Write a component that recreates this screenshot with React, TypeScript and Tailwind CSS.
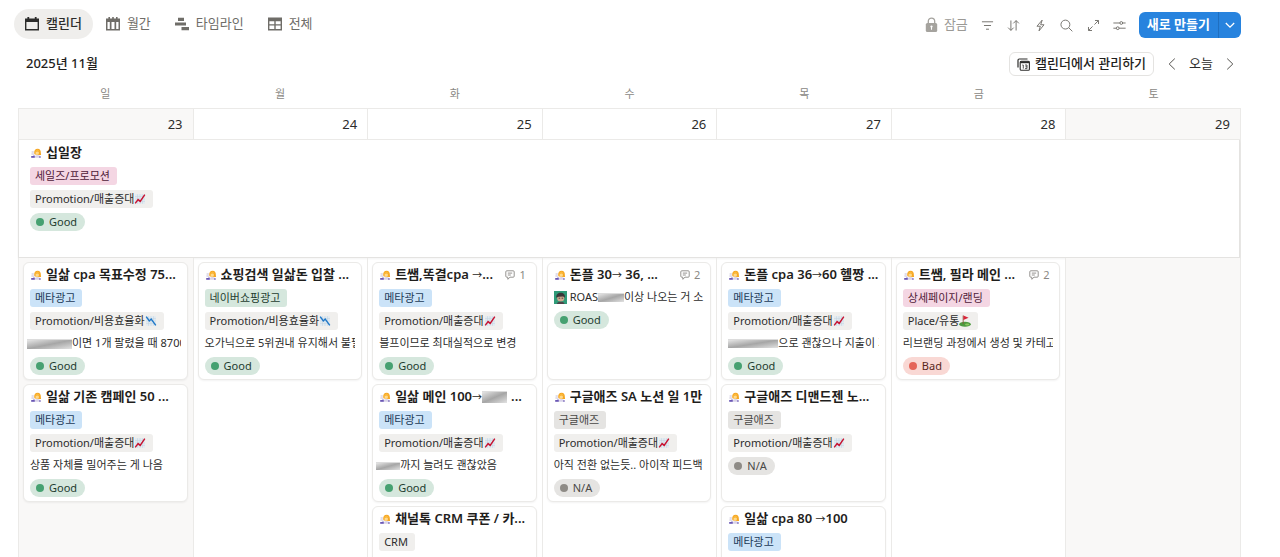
import type { ReactNode } from 'react';

type Tone = 'blue' | 'pink' | 'green' | 'light' | 'gray';
type StatusName = 'Good' | 'Bad' | 'N/A';
type Mark = 'up' | 'down' | 'golf';

interface Item {
  title: ReactNode;
  comments?: number;
  tag?: { label: string; tone: Tone };
  goal?: { label: string; mark: Mark };
  note?: ReactNode;
  status?: StatusName;
}

const toneClass: Record<Tone, string> = {
  blue: 'bg-[#cbe3f8] text-[#1b3a57]',
  pink: 'bg-[#f4d6e3] text-[#4f2038]',
  green: 'bg-[#d5e7dd] text-[#1f3d30]',
  light: 'bg-[#f0efed] text-[#2c2c2b]',
  gray: 'bg-[#e5e4e2] text-[#494846]',
};

const statusClass: Record<StatusName, { pill: string; dot: string }> = {
  Good: { pill: 'bg-[#d5e7dd] text-[#1f3d30]', dot: 'bg-[#46a171]' },
  Bad: { pill: 'bg-[#f9d8d4] text-[#5a2620]', dot: 'bg-[#e56458]' },
  'N/A': { pill: 'bg-[#e5e4e2] text-[#494846]', dot: 'bg-[#8e8b86]' },
};

function PersonEmoji() {
  return (
    <svg viewBox="0 0 12 12" className="size-3 shrink-0" aria-hidden="true">
      <path d="M4.2 6.6c-.2-3 1-4.8 3.4-4.8s3.3 1.6 3.3 4.6l.2 1.6H9.6L5 7.6z" fill="#f5a623" />
      <circle cx="7.2" cy="6" r="1.8" fill="#ffd98a" />
      <path d="M5.2 5.2c1.4 0 2.3-.5 2.8-1.2.4.7.9 1 1.6 1.2l-.5-2-1.7-.7-1.8.9z" fill="#fbb83a" />
      <path d="M4.6 10.8c0-1.8 1-2.8 2.9-2.8s3 1 3 2.8z" fill="#d9d3ea" />
      <path d="M1.6 4.6h2.2v.9H1.6zM1.4 6.4h2.4v1H1.4z" fill="#c3bdd6" />
      <path d="M1.2 9h3.6v1.8H1.2z" fill="#6a57b4" />
      <path d="M3.4 7.8h1.2V9H3.4z" fill="#a79bd0" />
      <path d="M9.3 9.2h1.3v1.6H9.3z" fill="#6a57b4" />
    </svg>
  );
}

function MarkEmoji({ mark }: { mark: Mark }) {
  if (mark === 'golf') {
    return (
      <svg viewBox="0 0 12 12" className="size-3 shrink-0" aria-hidden="true">
        <ellipse cx="6" cy="9.3" rx="5.8" ry="2.5" fill="#4c9a3f" />
        <ellipse cx="8.2" cy="9.5" rx="2.2" ry=".9" fill="#8cc860" />
        <path d="M3.7.5h.9v8.4h-.9z" fill="#8a5a3c" />
        <path d="M4.4.5 9.6 2.7 4.4 5z" fill="#d9253a" />
      </svg>
    );
  }
  return (
    <svg viewBox="0 0 12 12" className="size-3 shrink-0" aria-hidden="true">
      <path d="M1 1.2h10v9.6H1z" fill="#e2ebf2" />
      <path d="M1 3.6h10M1 6h10M1 8.4h10M3.5 1.2v9.6M6 1.2v9.6M8.5 1.2v9.6" stroke="#c3d0dc" strokeWidth=".5" />
      {mark === 'up' ? (
        <path d="M1.2 10.4 4.1 6.6l2.1 1.8L10.8 1.6" fill="none" stroke="#c8102e" strokeWidth="1.4" />
      ) : (
        <path d="M1.2 1.6 4.3 6l1.9-2 4.6 6.4" fill="none" stroke="#1f78c8" strokeWidth="1.4" />
      )}
    </svg>
  );
}

function Avatar() {
  return (
    <svg viewBox="0 0 13 13" className="size-[13px] shrink-0" aria-hidden="true">
      <path d="M0 0h13v13H0z" fill="#2f9b78" />
      <circle cx="6.7" cy="7" r="3.6" fill="#cfa88f" />
      <path d="M2.3 6.8C2 3.4 4 1.8 6.7 1.8s4.6 1.7 4.2 5L9.2 5.4l-4.6.3z" fill="#3a3638" />
      <path d="M4.6 7.2h1.6M7.6 7.2h1.6" stroke="#3a2c2a" strokeWidth=".8" />
      <path d="M2.8 13c.3-1.7 1.7-2.3 3.9-2.3s3.5.6 3.9 2.3z" fill="#4d444a" />
    </svg>
  );
}

function Smear({ className }: { className: string }) {
  return (
    <span
      className={`inline-block shrink-0 border-t border-[#dcdcdc] bg-linear-to-br from-[#e6e6e6] via-[#a6a6a6] to-[#e2e2e2] ${className}`}
    />
  );
}

function Arrow() {
  return <span className="text-[10px] font-normal">→</span>;
}

function Tag({ tone, children }: { tone: Tone; children: ReactNode }) {
  return (
    <span
      className={`flex h-[18px] w-fit items-center whitespace-nowrap rounded-[3px] pl-[5px] pr-[7px] text-[11px] ${toneClass[tone]}`}
    >
      {children}
    </span>
  );
}

function Status({ name }: { name: StatusName }) {
  const s = statusClass[name];
  return (
    <span
      className={`flex h-[18px] w-fit items-center gap-[5px] rounded-full pl-[6px] pr-2 text-[11px] ${s.pill}`}
    >
      <span className={`size-2 rounded-full ${s.dot}`} />
      {name}
    </span>
  );
}

function EventBody({ item }: { item: Item }) {
  return (
    <>
      <div className="mb-1 flex h-5 items-center gap-1">
        <PersonEmoji />
        <h3 className="flex min-w-0 flex-1 items-center overflow-hidden whitespace-pre text-[13px] font-semibold text-[#1f1e1c]">
          {item.title}
        </h3>
        {item.comments !== undefined && (
          <span className="flex shrink-0 items-center gap-1 pr-1 text-[11px] text-[#8a8884]">
            <svg viewBox="0 0 10 10" className="size-[10px]" fill="none" stroke="currentColor" strokeWidth=".9" aria-hidden="true">
              <path d="M1.8.8h6.4q1 0 1 1v4.4q0 1-1 1H5L2.8 9.3V7.2h-1q-1 0-1-1V1.8q0-1 1-1zM2.8 3.1h4.4M2.8 5h3" />
            </svg>
            {item.comments}
          </span>
        )}
      </div>
      <div className="flex flex-col gap-[5px]">
        {item.tag && <Tag tone={item.tag.tone}>{item.tag.label}</Tag>}
        {item.goal && (
          <Tag tone="light">
            {item.goal.label}
            <MarkEmoji mark={item.goal.mark} />
          </Tag>
        )}
        {item.note && (
          <p className="-ml-[3px] flex h-[17px] items-center overflow-hidden whitespace-nowrap pl-[3px] text-[11px] text-[#2c2c2b]">
            {item.note}
          </p>
        )}
        {item.status && <Status name={item.status} />}
      </div>
    </>
  );
}

const meta = { label: '메타광고', tone: 'blue' as Tone };
const google = { label: '구글애즈', tone: 'gray' as Tone };
const sales = { label: 'Promotion/매출증대', mark: 'up' as Mark };
const cost = { label: 'Promotion/비용효율화', mark: 'down' as Mark };

const market: Item = {
  title: '십일장',
  tag: { label: '세일즈/프로모션', tone: 'pink' },
  goal: sales,
  status: 'Good',
};

const days: { name: string; date: number; items: Item[] }[] = [
  {
    name: '일',
    date: 23,
    items: [
      {
        title: '일삶 cpa 목표수정 75...',
        tag: meta,
        goal: cost,
        note: (
          <>
            <Smear className="-ml-[3px] h-[10px] w-[45px]" />
            이면 1개 팔렸을 때 8700
          </>
        ),
        status: 'Good',
      },
      { title: '일삶 기존 캠페인 50 ...', tag: meta, goal: sales, note: '상품 자체를 밀어주는 게 나음', status: 'Good' },
    ],
  },
  {
    name: '월',
    date: 24,
    items: [
      {
        title: '쇼핑검색 일삶돈 입찰 ...',
        tag: { label: '네이버쇼핑광고', tone: 'green' },
        goal: cost,
        note: '오가닉으로 5위권내 유지해서 불필',
        status: 'Good',
      },
    ],
  },
  {
    name: '화',
    date: 25,
    items: [
      {
        title: (
          <>
            {'트쌤,똑결cpa '}
            <Arrow />
            ...
          </>
        ),
        comments: 1,
        tag: meta,
        goal: sales,
        note: '블프이므로 최대실적으로 변경',
        status: 'Good',
      },
      {
        title: (
          <>
            일삶 메인 100
            <Arrow />
            <Smear className="mr-1 h-3 w-[25px]" />
            ...
          </>
        ),
        tag: meta,
        goal: sales,
        note: (
          <>
            <Smear className="-ml-[3px] h-2 w-[24px]" />
            까지 늘려도 괜찮았음
          </>
        ),
        status: 'Good',
      },
      { title: '채널톡 CRM 쿠폰 / 카...', tag: { label: 'CRM', tone: 'light' } },
    ],
  },
  {
    name: '수',
    date: 26,
    items: [
      {
        title: (
          <>
            돈플 30
            <Arrow />
            {' 36, ...'}
          </>
        ),
        comments: 2,
        note: (
          <>
            <Avatar />
            <span className="ml-[3px]">ROAS</span>
            <Smear className="h-[9px] w-[26px]" />
            이상 나오는 거 소
          </>
        ),
        status: 'Good',
      },
      { title: '구글애즈 SA 노션 일 1만', tag: google, goal: sales, note: '아직 전환 없는듯.. 아이작 피드백', status: 'N/A' },
    ],
  },
  {
    name: '목',
    date: 27,
    items: [
      {
        title: (
          <>
            돈플 cpa 36
            <Arrow />
            60 헬짱 ...
          </>
        ),
        tag: meta,
        goal: sales,
        note: (
          <>
            <Smear className="h-[9px] w-[50px]" />
            으로 괜찮으나 지출이 기존
          </>
        ),
        status: 'Good',
      },
      { title: '구글애즈 디맨드젠 노...', tag: google, goal: sales, status: 'N/A' },
      {
        title: (
          <>
            {'일삶 cpa 80 '}
            <Arrow />
            100
          </>
        ),
        tag: meta,
      },
    ],
  },
  {
    name: '금',
    date: 28,
    items: [
      {
        title: '트쌤, 필라 메인 ...',
        comments: 2,
        tag: { label: '상세페이지/랜딩', tone: 'pink' },
        goal: { label: 'Place/유통', mark: 'golf' },
        note: '리브랜딩 과정에서 생성 및 카테고리',
        status: 'Bad',
      },
    ],
  },
  { name: '토', date: 29, items: [] },
];

const tabs: { label: string; icon: ReactNode }[] = [
  {
    label: '캘린더',
    icon: <path fillRule="evenodd" d="M2.4 0h1.8v1.5h5.6V0h1.8v1.5H14V13.4H0V1.5h2.4zM1.4 5v7h11.2V5z" />,
  },
  {
    label: '월간',
    icon: (
      <path
        fillRule="evenodd"
        d="M2.4 0H4v1.5h2.2V0h1.6v1.5H10V0h1.6v1.5H14v11.9H0V1.5h2.4zM1.5 5v7h2.3V5zM5.5 5v7h3V5zM10.2 5v7h2.3V5z"
      />
    ),
  },
  { label: '타임라인', icon: <path d="M3 .8h6v3.2H3zM0 5.4h11v3.2H0zM6.5 10H14v3.2H6.5z" /> },
  {
    label: '전체',
    icon: (
      <path
        fillRule="evenodd"
        d="M0 .5h14v13H0zM1.4 4.2v3h4.9v-3zM7.7 4.2v3h4.9v-3zM1.4 8.6v3.3h4.9V8.6zM7.7 8.6v3.3h4.9V8.6z"
      />
    ),
  },
];

const tools: { label: string; icon: ReactNode }[] = [
  { label: '필터', icon: <path d="M1 3h12M3.2 7h7.6M5.4 11h3.2" /> },
  { label: '정렬', icon: <path d="M4.2 1.6v10.6M1.2 9.3l3 3 3-3M9.8 12.4V1.8M6.8 4.7l3-3 3 3" /> },
  { label: '자동화', icon: <path d="M8.8 1.2 3.2 7.8h3.6L5.4 12.8l5.4-6.6H7.2z" strokeLinejoin="round" /> },
  { label: '검색', icon: <path d="M10.6 6a4.8 4.8 0 1 1-9.6 0 4.8 4.8 0 0 1 9.6 0zM9.4 9.4l3.9 3.9" /> },
  { label: '전체 화면', icon: <path d="M8.6 1.6h3.8v3.8M12.2 1.8 8 6M5.4 12.4H1.6V8.6M1.8 12.2 6 8" /> },
  {
    label: '설정',
    icon: (
      <path d="M.4 4.3h7M10.4 4.3h3.2M10.4 4.3a1.5 1.5 0 1 1-3 0 1.5 1.5 0 0 1 3 0zM.4 9.9h3.2M6.6 9.9h7M6.6 9.9a1.5 1.5 0 1 1-3 0 1.5 1.5 0 0 1 3 0z" />
    ),
  },
];

const isWeekend = (i: number) => i === 0 || i === 6;

export default function App() {
  return (
    <div className="flex h-screen flex-col overflow-hidden bg-white pl-[18px] pr-[39px] font-['Noto_Sans','Noto_Sans_CJK_KR',sans-serif] text-[#2c2c2b]">
      <header className="-ml-1 flex h-[52px] shrink-0 items-start justify-between pt-[9px]">
        <nav className="flex gap-[2px]">
          {tabs.map((tab, i) => (
            <button
              key={tab.label}
              type="button"
              className={`flex h-[30px] items-center gap-[7px] rounded-full px-[11px] text-[13px] ${
                i === 0 ? 'bg-[#efeeec] font-medium text-[#2c2c2b]' : 'text-[#6f6d68]'
              }`}
            >
              <svg viewBox="0 0 14 14" className="size-[14px]" fill="currentColor" aria-hidden="true">
                {tab.icon}
              </svg>
              {tab.label}
            </button>
          ))}
        </nav>
        <div className="mt-[3px] flex h-[26px] items-center">
          <button type="button" className="flex items-center gap-[6px] pr-[6px] text-[13px] text-[#9b9995]">
            <svg viewBox="0 0 13 16" className="h-4 w-[13px]" aria-hidden="true">
              <path d="M3.3 7V4.3a3.2 3.2 0 0 1 6.4 0V7" fill="none" stroke="#a5a39e" strokeWidth="1.3" />
              <rect x=".8" y="6" width="11.4" height="9" rx="1.6" fill="#a5a39e" />
              <circle cx="6.5" cy="9.6" r="1.1" fill="#fff" />
              <path d="M6.5 9.6v2.6" stroke="#fff" strokeWidth="1.1" strokeLinecap="round" />
            </svg>
            잠금
          </button>
          <div className="mr-[6px] grid w-[159px] grid-cols-6">
            {tools.map((tool) => (
              <button key={tool.label} type="button" aria-label={tool.label} className="flex h-[26px] items-center justify-center text-[#6f6d68]">
                <svg viewBox="0 0 14 14" className="size-[13px]" fill="none" stroke="currentColor" strokeWidth="1" aria-hidden="true">
                  {tool.icon}
                </svg>
              </button>
            ))}
          </div>
          <div className="flex h-[26px] overflow-hidden rounded-md bg-[#2783de] text-white">
            <button type="button" className="border-r border-[#1f6fc0] px-2 text-[13px] font-semibold">
              새로 만들기
            </button>
            <button type="button" aria-label="템플릿 선택" className="flex w-[22px] items-center justify-center">
              <svg viewBox="0 0 10 10" className="size-[10px]" fill="none" stroke="currentColor" strokeWidth="1.3" aria-hidden="true">
                <path d="M.8 3 5 7.2 9.2 3" />
              </svg>
            </button>
          </div>
        </div>
      </header>

      <div className="flex h-6 shrink-0 items-center justify-between pl-2">
        <h2 className="text-[13px] font-medium text-[#1f1e1c]">2025년 11월</h2>
        <div className="flex items-center">
          <button
            type="button"
            className="mr-[11px] flex h-6 items-center gap-[5px] rounded-md border border-[#e4e3e1] px-[7px] text-[13px] font-medium text-[#1f1e1c]"
          >
            <svg viewBox="0 0 13 13" className="size-[13px]" aria-hidden="true">
              <path d="M1 9.5V2.2Q1 1 2.2 1h8.3" fill="none" stroke="#2c2c2b" strokeWidth="1.2" />
              <path d="M3.2 4.4q0-1.1 1.1-1.1h7q1.1 0 1.1 1.1v6.8q0 1.1-1.1 1.1h-7q-1.1 0-1.1-1.1z" fill="none" stroke="#2c2c2b" strokeWidth="1.1" />
              <path d="M3.2 3.3h9.2v1.9H3.2z" fill="#2c2c2b" />
              <path d="M5.3 7h1v3.6M8 7h2v3.6H8M8.4 8.8H10" fill="none" stroke="#2c2c2b" strokeWidth=".8" />
            </svg>
            캘린더에서 관리하기
          </button>
          <button type="button" aria-label="이전" className="flex size-[14px] items-center justify-center text-[#55534f]">
            <svg viewBox="0 0 14 14" className="size-[14px]" fill="none" stroke="currentColor" strokeWidth="1" aria-hidden="true">
              <path d="M9.8 1.6 4.2 7l5.6 5.4" />
            </svg>
          </button>
          <button type="button" className="px-[10px] text-[13px]">
            오늘
          </button>
          <button type="button" aria-label="다음" className="mr-1 flex size-[14px] items-center justify-center text-[#55534f]">
            <svg viewBox="0 0 14 14" className="size-[14px]" fill="none" stroke="currentColor" strokeWidth="1" aria-hidden="true">
              <path d="M4.2 1.6 9.8 7l-5.6 5.4" />
            </svg>
          </button>
        </div>
      </div>

      <div className="grid h-8 shrink-0 grid-cols-7 items-center pt-1 text-center text-[11px] text-[#8a8884]">
        {days.map((day) => (
          <div key={day.name}>{day.name}</div>
        ))}
      </div>

      <main className="flex min-h-0 flex-1 flex-col border-r border-t border-[#ebeae8]">
        <div className="grid shrink-0 grid-cols-7 border-b border-[#ebeae8]">
          {days.map((day, i) => (
            <div
              key={day.date}
              className={`flex h-[30px] items-center justify-end border-l border-[#ebeae8] pr-[10px] pt-[2px] text-[13px] ${
                isWeekend(i) ? 'bg-[#f9f8f7]' : ''
              }`}
            >
              {day.date}
            </div>
          ))}
        </div>

        <article className="h-[118px] shrink-0 border-x border-b border-[#e4e3e1] pl-[11px] pt-[3px] shadow-xs">
          <EventBody item={market} />
        </article>

        <div className="grid min-h-0 flex-1 grid-cols-7">
          {days.map((day, i) => (
            <div
              key={day.date}
              className={`flex min-h-0 flex-col gap-1 overflow-hidden border-l border-[#ebeae8] pl-1 pr-[5px] pt-1 ${
                isWeekend(i) ? 'bg-[#f9f8f7]' : ''
              }`}
            >
              {day.items.map((item, n) => (
                <article
                  key={n}
                  className="min-h-[118px] shrink-0 rounded-md border border-[#ebeae8] bg-white px-[6px] pb-1 pt-[2px] shadow-xs"
                >
                  <EventBody item={item} />
                </article>
              ))}
            </div>
          ))}
        </div>
      </main>
    </div>
  );
}
